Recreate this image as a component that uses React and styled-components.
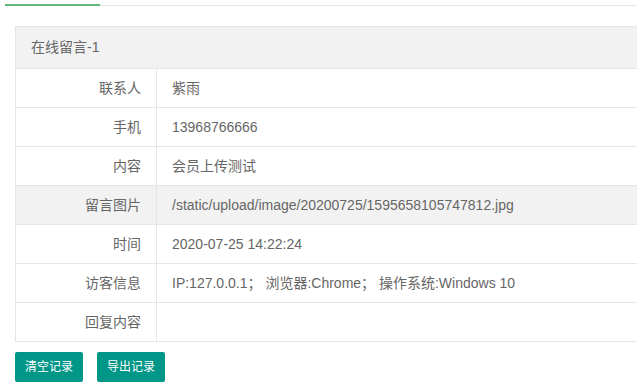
import React from "react";
import styled, { createGlobalStyle } from "styled-components";

const Global = createGlobalStyle`
  html, body { margin: 0; padding: 0; background: #fff; overflow: hidden; }
  body { font-family: "Liberation Sans", Arial, "Noto Sans CJK SC", sans-serif; font-size: 14px; color: #666; }
`;

const Page = styled.div`
  padding: 0 0 0 5px;
  overflow: hidden;
`;

const TabTitle = styled.div`
  height: 5px;
  border-bottom: 1px solid #e6e6e6;
  position: relative;
`;

const ActiveTab = styled.div`
  position: absolute;
  left: 0;
  bottom: -1px;
  width: 95px;
  height: 2px;
  background: #5fb878;
`;

const Content = styled.div`
  padding: 20px 0 0 10px;
  overflow: hidden;
`;

const Table = styled.table`
  width: calc(100% + 40px);
  border-collapse: collapse;
  border-spacing: 0;
  margin-bottom: 10px;
  background: #fff;
  color: #666;
`;

const HeadCell = styled.th`
  background: #f2f2f2;
  border: 1px solid #e6e6e6;
  padding: 10px 15px;
  line-height: 21px;
  font-weight: 400;
  text-align: left;
  font-size: 14px;
`;

const Row = styled.tr`
  background: ${(p) => (p.$hover ? "#f2f2f2" : "#fff")};
`;

const Label = styled.td`
  width: 110px;
  border: 1px solid #e6e6e6;
  padding: 9px 15px;
  line-height: 20px;
  text-align: right;
  white-space: nowrap;
`;

const Value = styled.td`
  border: 1px solid #e6e6e6;
  padding: 9px 15px;
  line-height: 20px;
  text-align: left;
  white-space: nowrap;
`;

const Actions = styled.div`
  display: flex;
  gap: 14px;
`;

const Button = styled.button`
  height: 30px;
  padding: 0 10px;
  border: none;
  border-radius: 2px;
  background: #009688;
  color: #fff;
  font-family: "Liberation Sans", Arial, "Noto Sans CJK SC", sans-serif;
  font-size: 12px;
  line-height: 30px;
  cursor: pointer;
`;

const rows = [
  ["联系人", "紫雨"],
  ["手机", "13968766666"],
  ["内容", "会员上传测试"],
  ["留言图片", "/static/upload/image/20200725/1595658105747812.jpg", true],
  ["时间", "2020-07-25 14:22:24"],
  ["访客信息", "IP:127.0.0.1；  浏览器:Chrome；  操作系统:Windows 10"],
  ["回复内容", ""],
];

export default function App() {
  return (
    <>
      <Global />
      <Page>
        <TabTitle>
          <ActiveTab />
        </TabTitle>
        <Content>
          <Table>
            <thead>
              <tr>
                <HeadCell colSpan={2}>在线留言-1</HeadCell>
              </tr>
            </thead>
            <tbody>
              {rows.map(([k, v, h]) => (
                <Row key={k} $hover={h}>
                  <Label>{k}</Label>
                  <Value>{v}</Value>
                </Row>
              ))}
            </tbody>
          </Table>
          <Actions>
            <Button>清空记录</Button>
            <Button>导出记录</Button>
          </Actions>
        </Content>
      </Page>
    </>
  );
}
